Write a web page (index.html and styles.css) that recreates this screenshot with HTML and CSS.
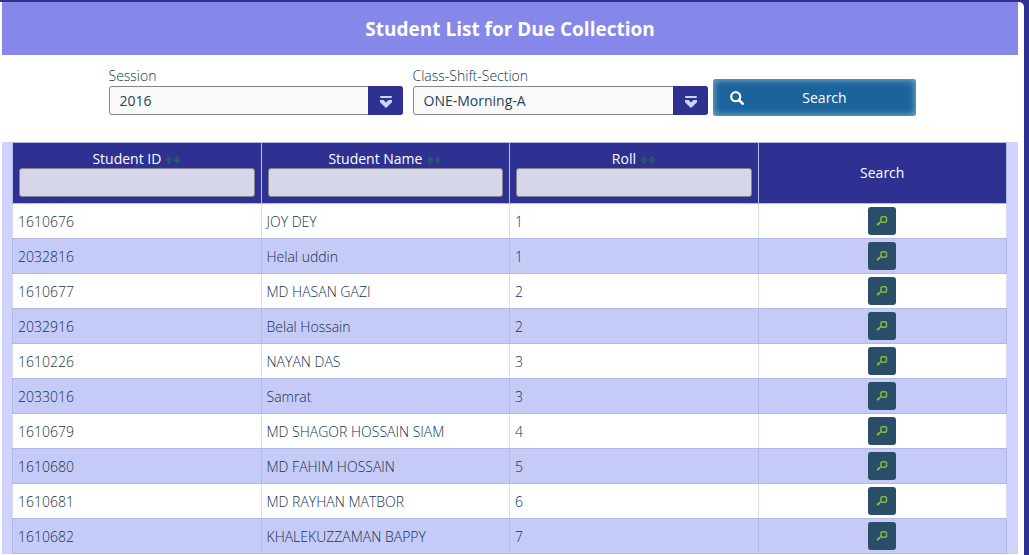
FILE: index.html
```
<!DOCTYPE html>
<html lang="en">
<head>
<meta charset="utf-8">
<title>Student List for Due Collection</title>
<link rel="stylesheet" href="styles.css">
</head>
<body>
<svg class="symbols" aria-hidden="true">
  <symbol id="chevron" viewBox="0 0 12 12"><path d="M1 1h10" stroke="currentColor" stroke-width="2" stroke-linecap="round"/><path d="M0 4h3.600L6 6.600 8.400 4H12v2.200L6 12 0 6.200z" fill="currentColor"/></symbol>
  <symbol id="lens" viewBox="0 0 14 14"><circle cx="5.700" cy="5.700" r="4.500" fill="none" stroke="currentColor" stroke-width="2.300"/><path d="M9 9l3.700 3.700" stroke="currentColor" stroke-width="2.600" stroke-linecap="round"/></symbol>
  <symbol id="find" viewBox="0 0 12 10"><path d="M5 1.500L6 .8h3.500l1 1v3.400l-1 1H6l-1-1zM5 5.500L1.200 9" fill="none" stroke="currentColor" stroke-width="1.500"/><path d="M3.500 7L1.200 9" stroke="currentColor" stroke-width="2.200"/></symbol>
  <symbol id="sort" viewBox="0 0 16 10"><path d="M4 9V3M12 1v6" stroke="currentColor" stroke-width="2.400"/><path d="M0 5.800L4 .8l4 5zM8 4.200l4 5 4-5z" fill="currentColor"/></symbol>
</svg>
<main class="panel">
  <h1 class="title">Student List for Due Collection</h1>
  <form class="filters">
    <div class="field">
      <label for="session">Session</label>
      <div class="picker">
        <select id="session"><option>2016</option></select>
        <span class="picker-arrow"><svg><use href="#chevron"/></svg></span>
      </div>
    </div>
    <div class="field">
      <label for="section">Class-Shift-Section</label>
      <div class="picker">
        <select id="section"><option>ONE-Morning-A</option></select>
        <span class="picker-arrow"><svg><use href="#chevron"/></svg></span>
      </div>
    </div>
    <button class="search" type="button"><svg><use href="#lens"/></svg><span>Search</span></button>
  </form>
  <div class="list">
    <table class="students">
      <thead>
        <tr>
          <th><label for="f-id">Student ID <svg class="sort"><use href="#sort"/></svg></label><input id="f-id" type="text"></th>
          <th><label for="f-name">Student Name <svg class="sort"><use href="#sort"/></svg></label><input id="f-name" type="text"></th>
          <th><label for="f-roll">Roll <svg class="sort"><use href="#sort"/></svg></label><input id="f-roll" type="text"></th>
          <th>Search</th>
        </tr>
      </thead>
      <tbody>
        <tr><td>1610676</td><td>JOY DEY</td><td>1</td><td><button class="find" type="button" aria-label="Find"><svg><use href="#find"/></svg></button></td></tr>
        <tr><td>2032816</td><td>Helal uddin</td><td>1</td><td><button class="find" type="button" aria-label="Find"><svg><use href="#find"/></svg></button></td></tr>
        <tr><td>1610677</td><td>MD HASAN GAZI</td><td>2</td><td><button class="find" type="button" aria-label="Find"><svg><use href="#find"/></svg></button></td></tr>
        <tr><td>2032916</td><td>Belal Hossain</td><td>2</td><td><button class="find" type="button" aria-label="Find"><svg><use href="#find"/></svg></button></td></tr>
        <tr><td>1610226</td><td>NAYAN DAS</td><td>3</td><td><button class="find" type="button" aria-label="Find"><svg><use href="#find"/></svg></button></td></tr>
        <tr><td>2033016</td><td>Samrat</td><td>3</td><td><button class="find" type="button" aria-label="Find"><svg><use href="#find"/></svg></button></td></tr>
        <tr><td>1610679</td><td>MD SHAGOR HOSSAIN SIAM</td><td>4</td><td><button class="find" type="button" aria-label="Find"><svg><use href="#find"/></svg></button></td></tr>
        <tr><td>1610680</td><td>MD FAHIM HOSSAIN</td><td>5</td><td><button class="find" type="button" aria-label="Find"><svg><use href="#find"/></svg></button></td></tr>
        <tr><td>1610681</td><td>MD RAYHAN MATBOR</td><td>6</td><td><button class="find" type="button" aria-label="Find"><svg><use href="#find"/></svg></button></td></tr>
        <tr><td>1610682</td><td>KHALEKUZZAMAN BAPPY</td><td>7</td><td><button class="find" type="button" aria-label="Find"><svg><use href="#find"/></svg></button></td></tr>
      </tbody>
    </table>
  </div>
</main>
</body>
</html>
```
FILE: styles.css
```
* { box-sizing: border-box; }

body {
  margin: 0;
  padding: 2px 5px 0 0;
  background: #2e3191;
  color: #12344f;
  font: 330 14px/20px "Open Sans", "Noto Sans", sans-serif;
}

.symbols { display: none; }

.panel {
  min-height: calc(100vh - 2px);
  padding: 0 6px 0 2px;
  background: #fff;
  border-top-right-radius: 5px;
}

.title {
  margin: 0;
  padding: 14px 0 12px;
  background: #8587e9;
  color: #fff;
  font-size: 19px;
  line-height: 27px;
  font-weight: 700;
  text-align: center;
}

.filters {
  display: grid;
  grid-template-columns: 304fr 300fr 203fr;
  align-items: end;
  max-width: 811px;
  margin: 0 auto;
  padding: 11px 0 26px 4px;
}

.field { padding: 0 10px 1px 0; }
.field + .field { padding-right: 5px; }
.field label { display: block; }

.picker { position: relative; }

.picker select {
  display: block;
  width: 100%;
  height: 29px;
  padding: 0 44px 0 10px;
  border: 1px solid #84858a;
  border-radius: 3px;
  background: #f9f9f9;
  color: #1f4460;
  font: inherit;
  font-weight: 500;
  appearance: none;
}

.picker-arrow {
  position: absolute;
  top: 0;
  right: 0;
  bottom: 0;
  display: grid;
  place-items: center;
  width: 35px;
  padding: 3px 0 0 2px;
  border-radius: 0 3px 3px 0;
  background: #2e3191;
  color: #ccd5fa;
  pointer-events: none;
}

.picker-arrow svg { width: 12px; height: 12px; }

.search {
  display: flex;
  align-items: center;
  height: 37px;
  padding: 0 10px 0 17px;
  border: 0;
  border-radius: 3px;
  background: #1b639d;
  box-shadow: inset 0 0 7px 1px #7ab0c6;
  color: #fff;
  font: inherit;
  font-weight: 400;
}

.search svg { width: 14px; height: 14px; }
.search span { flex: 1; }

.list { padding: 0 11px 0 10px; background: #d0d3ff; }

.students {
  width: 100%;
  border-collapse: collapse;
  table-layout: fixed;
  background: #fff;
}

.students th {
  height: 60px;
  padding: 5px 6px 6px;
  border: 1px solid #b4bbe8;
  background: #2e3191;
  color: #fff;
  font-weight: 400;
}

.students th label { display: block; padding-top: 2px; line-height: 18px; }
.sort { width: 16px; height: 10px; color: #28576a; vertical-align: -1px; }

.students input {
  display: block;
  width: 100%;
  height: 29px;
  padding: 4px;
  border: 1px solid #84858f;
  border-radius: 3px;
  background: #d6d6e9;
  color: #2a4e69;
  font: inherit;
}

.students td {
  height: 35px;
  padding: 2px 5px 0;
  border: 1px solid #b3b9e5;
  border-right-color: #d9dbf0;
  border-left-color: #d9dbf0;
}

.students td:last-child { padding-top: 0; }

.students tr:nth-child(even) td {
  border-right-color: #b3b9e5;
  border-left-color: #b3b9e5;
  background: #c6caf6;
}

.find {
  display: grid;
  place-items: center;
  width: 28px;
  height: 28px;
  margin: 0 auto;
  padding: 0;
  border: 0;
  border-radius: 3px;
  background: #2a4e69;
  color: #7dbd36;
}

.find svg { width: 12px; height: 10px; }
```
